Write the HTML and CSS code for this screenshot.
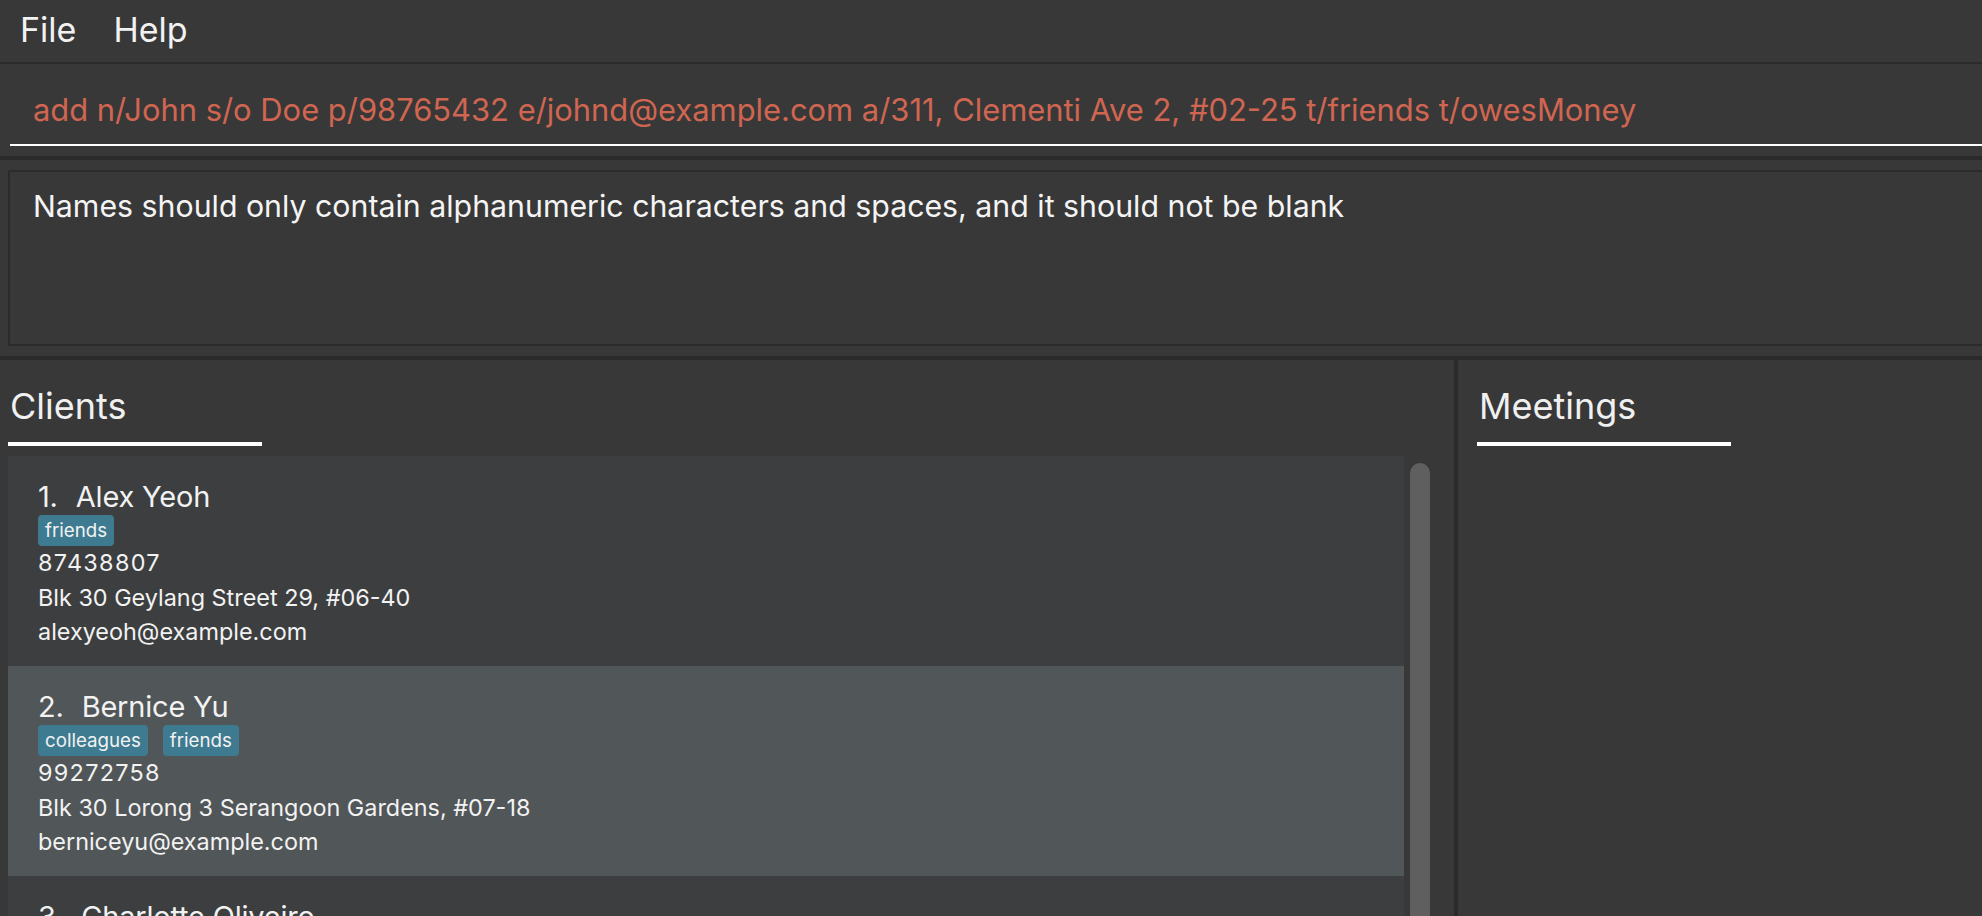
FILE: index.html
```html
<!DOCTYPE html>
<html lang="en">
<head>
<meta charset="utf-8">
<title>Address Book</title>
<link rel="stylesheet" href="styles.css">
</head>
<body>
<div class="app">
  <nav class="menubar">
    <span class="menu-item">File</span>
    <span class="menu-item">Help</span>
  </nav>

  <div class="command-box">
    <div class="command-field">add n/John s/o Doe p/98765432 e/johnd@example.com a/311, Clementi Ave 2, #02-25 t/friends t/owesMoney</div>
  </div>

  <div class="result-area">
    <div class="result-box">Names should only contain alphanumeric characters and spaces, and it should not be blank</div>
  </div>

  <main class="panels">
    <section class="panel panel-clients">
      <div class="tab-header"><span class="tab-title">Clients</span></div>
      <div class="list-row">
        <ul class="person-list">
          <li class="person-card even">
            <div class="person-name"><span class="person-index">1.</span>Alex Yeoh</div>
            <div class="tags"><span class="tag">friends</span></div>
            <div class="person-line phone">87438807</div>
            <div class="person-line">Blk 30 Geylang Street 29, #06-40</div>
            <div class="person-line">alexyeoh@example.com</div>
          </li>
          <li class="person-card odd">
            <div class="person-name"><span class="person-index">2.</span>Bernice Yu</div>
            <div class="tags"><span class="tag">colleagues</span><span class="tag">friends</span></div>
            <div class="person-line phone">99272758</div>
            <div class="person-line">Blk 30 Lorong 3 Serangoon Gardens, #07-18</div>
            <div class="person-line">berniceyu@example.com</div>
          </li>
          <li class="person-card even">
            <div class="person-name"><span class="person-index">3.</span>Charlotte Oliveiro</div>
            <div class="tags"><span class="tag">neighbours</span></div>
            <div class="person-line phone">93210283</div>
            <div class="person-line">Blk 11 Ang Mo Kio Street 74, #11-04</div>
            <div class="person-line">charlotte@example.com</div>
          </li>
        </ul>
        <div class="scrollbar"><div class="scroll-thumb"></div></div>
      </div>
    </section>
    <div class="divider"></div>
    <section class="panel panel-meetings">
      <div class="tab-header"><span class="tab-title">Meetings</span></div>
    </section>
  </main>
</div>
</body>
</html>
```

FILE: styles.css
```css
* { box-sizing: border-box; }

html, body {
  margin: 0;
  padding: 0;
  background: #383838;
  overflow: hidden;
}

body {
  font-family: "Inter", "Liberation Sans", sans-serif;
  color: #f4f4f4;
}

.app {
  width: 1982px;
  height: 916px;
  display: flex;
  flex-direction: column;
  overflow: hidden;
  background: #383838;
}

/* menu bar */
.menubar {
  height: 64px;
  flex: none;
  display: flex;
  align-items: center;
  gap: 37px;
  padding: 0 0 2px 20px;
  border-bottom: 2px solid #2b2b2b;
  font-size: 34px;
  color: #f2f2f2;
}

.menu-item { line-height: 1; }

/* command box */
.command-box {
  flex: none;
  padding: 26px 0 10px 10px;
  border-bottom: 4px solid #2b2b2b;
}

.command-field {
  font-size: 30.9px;
  line-height: 40px;
  padding: 0 0 14px 23px;
  border-bottom: 2px solid #ffffff;
  color: #d06651;
  white-space: nowrap;
}

/* result display */
.result-area {
  flex: none;
  padding: 10px 0 10px 8px;
  border-bottom: 4px solid #2b2b2b;
}

.result-box {
  height: 176px;
  margin-right: -20px;
  border: 2px solid #2b2b2b;
  padding: 14px 0 0 23px;
  font-size: 30.3px;
  line-height: 40px;
  color: #f4f4f4;
}

/* panels */
.panels {
  flex: 1;
  display: flex;
  min-height: 0;
  overflow: hidden;
}

.panel {
  padding-top: 24px;
  overflow: hidden;
}

.panel-clients {
  width: 1454px;
  flex: none;
  padding-left: 8px;
}

.divider {
  width: 4px;
  flex: none;
  background: #2b2b2b;
}

.panel-meetings {
  flex: 1;
  padding-left: 19px;
}

.tab-header {
  width: 254px;
  padding: 0 0 14px 2px;
  border-bottom: 4px solid #ffffff;
}

.tab-title {
  display: block;
  font-size: 36px;
  line-height: 44px;
  color: #f0f0f0;
}

/* list */
.list-row {
  display: flex;
  gap: 6px;
  margin-top: 10px;
}

.person-list {
  list-style: none;
  margin: 0;
  padding: 0;
  width: 1396px;
  flex: none;
}

.person-card {
  height: 210px;
  padding: 23px 0 0 30px;
}

.person-card.even { background: #3c3e3f; }
.person-card.odd { background: #515658; }

.person-name {
  font-size: 29px;
  line-height: 35px;
  letter-spacing: -0.2px;
  color: #f2f2f2;
}

.person-index {
  display: inline-block;
  margin-right: 18px;
}

.tags {
  display: flex;
  gap: 15px;
  margin-top: 1px;
}

.tag {
  background: #3e7b91;
  color: #f2f2f2;
  font-size: 18.7px;
  line-height: 27px;
  padding: 2px 7px 2px 7px;
  border-radius: 4px;
}

.person-line {
  font-size: 23.4px;
  line-height: 34.6px;
  color: #f2f2f2;
}

.person-line.phone { letter-spacing: 1.3px; }

.scrollbar {
  width: 20px;
  flex: none;
  padding-top: 7px;
}

.scroll-thumb {
  width: 20px;
  height: 600px;
  background: #5f5f5f;
  border-radius: 10px;
}
```
